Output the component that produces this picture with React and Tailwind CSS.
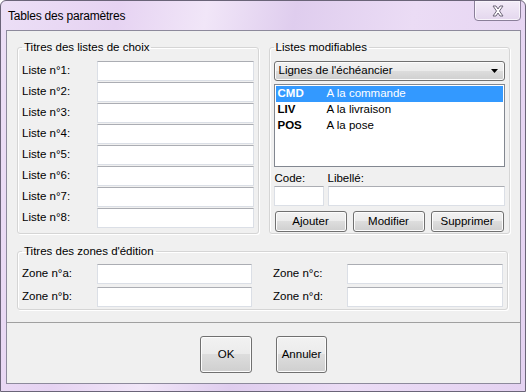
import React from "react";

const inputCls =
  "bg-white border border-[#dbdfe6] border-t-[#abadb3] h-[20px] outline-none";
const btnCls =
  "border border-[#707070] rounded-[3px] bg-[linear-gradient(#f2f2f2_0%,#ebebeb_49%,#dddddd_50%,#cfcfcf_100%)] shadow-[inset_0_0_0_1px_#fcfcfc] text-[11.5px] text-black flex items-center justify-center";

const GroupBox = ({ title, className, children }) => (
  <fieldset
    className={
      "border border-[#d5d5d5] rounded-[3px] shadow-[inset_1px_1px_0_#fff,1px_1px_0_#fff] p-0 m-0 min-w-0 " +
      className
    }
  >
    <legend className="ml-[4px] px-[2px] leading-[15px]">{title}</legend>
    {children}
  </fieldset>
);

const listeRows = [1, 2, 3, 4, 5, 6, 7, 8];

const items = [
  { code: "CMD", label: "A la commande", selected: true },
  { code: "LIV", label: "A la livraison" },
  { code: "POS", label: "A la pose" },
];

const CloseIcon = () => (
  <svg width="14" height="12" viewBox="0 0 14 12">
    <path
      d="M2 1 L5 1 L7 4 L9 1 L12 1 L8.5 6 L12 11 L9 11 L7 8 L5 11 L2 11 L5.5 6 Z"
      fill="#fff"
      stroke="#6d6478"
      strokeWidth="1"
      strokeLinejoin="round"
    />
  </svg>
);

const App = () => {
  return (
    <div
      className="w-[526px] h-[392px] relative overflow-hidden text-[11.5px] text-black bg-[linear-gradient(100deg,#ecdff6_0%,#e6d3f2_20%,#f1e6f8_35%,#dfcdee_50%,#ebdcf5_70%,#e4d2f1_100%)] border border-[#6a6478] rounded-t-[6px]"
      style={{ fontFamily: '"Liberation Sans", Arial, sans-serif' }}
    >
      {/* title bar */}
      <div className="h-[29px] flex justify-between items-start">
        <div className="pl-[7px] pt-[8px] text-[12px] leading-[15px] tracking-[-0.2px]">
          Tables des paramètres
        </div>
        <div className="mr-[4px] mt-[-1px] w-[47px] h-[21px] border border-[#8a7f99] rounded-b-[4px] bg-[linear-gradient(#f3ecf8,#e4d7ee)] flex items-center justify-center shadow-[inset_0_0_0_1px_#f8f4fb]">
          <CloseIcon />
        </div>
      </div>

      {/* client area */}
      <div className="ml-[5px] w-[515px] h-[354px] border border-[#8d8a9c] bg-[#f0f0f0] flex flex-col">
        <div className="h-[291px] flex flex-col px-[10px] pt-[9px]">
          <div className="flex gap-[10px]">
            <GroupBox title="Titres des listes de choix" className="w-[242px] h-[194px]">
              <div className="flex flex-col gap-[1px] pt-[6px] pl-[4px] pr-[4px]">
                {listeRows.map((n) => (
                  <div key={n} className="flex items-center h-[20px]">
                    <div className="w-[75px]">Liste n°{n}:</div>
                    <div className={inputCls + " w-[157px]"}></div>
                  </div>
                ))}
              </div>
            </GroupBox>

            <GroupBox title="Listes modifiables" className="w-[242px] h-[194px]">
              <div className="flex flex-col pt-[6px] px-[4px]">
                <div className="h-[20px] border border-[#707070] rounded-[3px] bg-[linear-gradient(#f2f2f2_0%,#ebebeb_49%,#dddddd_50%,#cfcfcf_100%)] shadow-[inset_0_0_0_1px_#fcfcfc] flex items-center justify-between pl-[4px] pr-[6px]">
                  <span>Lignes de l'échéancier</span>
                  <svg width="7" height="4" viewBox="0 0 7 4">
                    <path d="M0 0 L7 0 L3.5 4 Z" fill="#000" />
                  </svg>
                </div>
                <div className="mt-[3px] h-[83px] border border-[#828790] bg-white p-[1px]">
                  {items.map((it) => (
                    <div
                      key={it.code}
                      className={
                        "flex h-[16px] items-center " +
                        (it.selected ? "bg-[#3399ff] text-white" : "")
                      }
                    >
                      <span className="w-[51px] pl-[2px] font-bold">{it.code}</span>
                      <span>{it.label}</span>
                    </div>
                  ))}
                </div>
                <div className="flex mt-[4px] leading-[14px]">
                  <span className="w-[54px] pl-[1px]">Code:</span>
                  <span>Libellé:</span>
                </div>
                <div className="flex gap-[4px] mt-[1px]">
                  <div className={inputCls + " w-[51px]"}></div>
                  <div className={inputCls + " w-[177px]"}></div>
                </div>
                <div className="flex mt-[5px] h-[21px] pl-[1px] gap-[6px]">
                  <div className={btnCls + " w-[72px]"}>Ajouter</div>
                  <div className={btnCls + " w-[72px]"}>Modifier</div>
                  <div className={btnCls + " w-[73px]"}>Supprimer</div>
                </div>
              </div>
            </GroupBox>
          </div>

          <GroupBox title="Titres des zones d'édition" className="w-[491px] h-[66px] mt-[10px]">
            <div className="flex flex-col gap-[3px] pt-[5px] pl-[4px]">
              {[
                ["a", "c"],
                ["b", "d"],
              ].map(([l, r]) => (
                <div key={l} className="flex items-center h-[20px]">
                  <div className="w-[75px]">Zone n°{l}:</div>
                  <div className={inputCls + " w-[155px]"}></div>
                  <div className="w-[95px] pl-[21px]">Zone n°{r}:</div>
                  <div className={inputCls + " w-[156px]"}></div>
                </div>
              ))}
            </div>
          </GroupBox>
        </div>

        {/* buttons area */}
        <div className="flex-1 border-t border-[#a0a0a0] flex justify-center items-start pt-[13px] gap-[24px]">
          <div className={btnCls + " w-[52px] h-[37px]"}>OK</div>
          <div className={btnCls + " w-[51px] h-[37px]"}>Annuler</div>
        </div>
      </div>
    </div>
  );
};

export default App;
